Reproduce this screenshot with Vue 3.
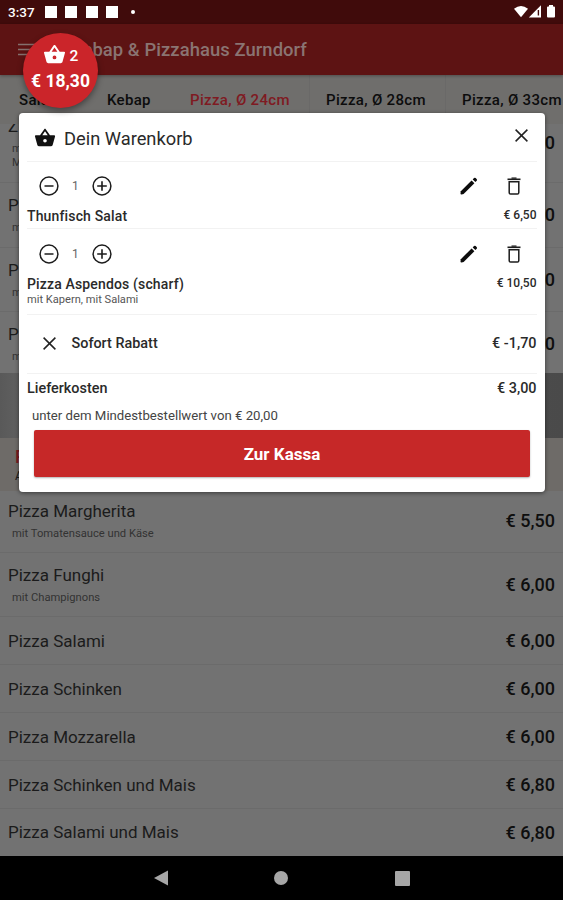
<script setup>
const tabs = [
  { label: 'Salate', cls: 'tab-a' },
  { label: 'Kebap', cls: 'tab-b' },
  { label: 'Pizza, Ø 24cm', cls: 'tab-c' },
  { label: 'Pizza, Ø 28cm', cls: 'tab-d' },
  { label: 'Pizza, Ø 33cm', cls: 'tab-e' },
]
const upper = [1, 2, 3]
const menu = [
  { name: 'Pizza Margherita', note: 'mit Tomatensauce und Käse', price: '€ 5,50' },
  { name: 'Pizza Funghi', note: 'mit Champignons', price: '€ 6,00' },
  { name: 'Pizza Salami', price: '€ 6,00' },
  { name: 'Pizza Schinken', price: '€ 6,00' },
  { name: 'Pizza Mozzarella', price: '€ 6,00' },
  { name: 'Pizza Schinken und Mais', price: '€ 6,80' },
  { name: 'Pizza Salami und Mais', price: '€ 6,80' },
]
const cart = [
  { name: 'Thunfisch Salat', price: '€ 6,50' },
  { name: 'Pizza Aspendos (scharf)', note: 'mit Kapern, mit Salami', price: '€ 10,50' },
]
const basket =
  'M5.5 21C4.72 21 4.04 20.55 3.71 19.9L1.1 10.44L1 10A1 1 0 0 1 2 9H6.58L11.18 2.43C11.36 2.17 11.66 2 12 2C12.34 2 12.64 2.17 12.82 2.44L17.42 9H22A1 1 0 0 1 23 10L22.96 10.29L20.29 19.9C19.96 20.55 19.28 21 18.5 21H5.5M12 4.74L9 9H15L12 4.74M12 13A2 2 0 0 0 10 15A2 2 0 0 0 12 17A2 2 0 0 0 14 15A2 2 0 0 0 12 13Z'
</script>

<template>
  <div class="screen">
    <div class="status">
      <span class="clock">3:37</span>
      <i v-for="n in 4" :key="n" class="sq"></i>
      <i class="dot"></i>
      <svg class="sys" width="44" height="16" viewBox="0 0 44 16">
        <path d="M1 4.8Q8 -0.8 15 4.8L8 13.2Z" fill="#fff" />
        <path d="M28 1.2V13.6H15.8Z" fill="#fff" />
        <path d="M25.4 6V11.5" stroke="#400b0b" stroke-width="1.4" />
        <path d="M34 3.4Q34 2.4 35 2.4H36V1H40V2.4H41Q42 2.4 42 3.4V12.6Q42 13.6 41 13.6H35Q34 13.6 34 12.6Z" fill="#fff" />
      </svg>
    </div>

    <div class="appbar">
      <svg class="burger" width="18" height="14" viewBox="0 0 18 14">
        <path d="M0 1.5H18M0 6.5H18M0 11.5H18" stroke="#85706e" stroke-width="1.7" />
      </svg>
      <span class="title">Kebap &amp; Pizzahaus Zurndorf</span>
    </div>

    <div class="tabs">
      <span v-for="t in tabs" :key="t.cls" class="tab" :class="t.cls">{{ t.label }}</span>
    </div>

    <div class="list">
      <div class="row first">
        <div class="info">
          <div class="name">Z</div>
          <div class="note">m</div>
          <div class="note second">M</div>
        </div>
        <span class="price">0</span>
      </div>
      <div v-for="n in upper" :key="n" class="row tall">
        <div class="info">
          <div class="name">P</div>
          <div class="note">m</div>
        </div>
        <span class="price">0</span>
      </div>
      <div class="banner"></div>
      <div class="section">
        <div class="section-title">P</div>
        <div class="section-note">A</div>
      </div>
      <div v-for="m in menu" :key="m.name" class="row" :class="{ tall: m.note }">
        <div class="info">
          <div class="name">{{ m.name }}</div>
          <div v-if="m.note" class="note">{{ m.note }}</div>
        </div>
        <span class="price">{{ m.price }}</span>
      </div>
    </div>

    <div class="nav">
      <svg width="14" height="16" viewBox="0 0 14 16"><path d="M0 8L14 0.4V15.6Z" fill="#a6a6a6" /></svg>
      <svg width="14" height="14" viewBox="0 0 14 14"><circle cx="7" cy="7" r="7" fill="#a6a6a6" /></svg>
      <svg width="15" height="15" viewBox="0 0 15 15"><rect width="15" height="15" rx="1" fill="#a6a6a6" /></svg>
    </div>

    <div class="dialog">
      <div class="head">
        <svg class="basket" width="22" height="22" viewBox="0 0 24 24"><path :d="basket" fill="#111" /></svg>
        <span class="heading">Dein Warenkorb</span>
        <svg class="close" width="13" height="13" viewBox="0 0 13 13">
          <path d="M0.6 0.6L12.4 12.4M12.4 0.6L0.6 12.4" stroke="#222" stroke-width="1.5" />
        </svg>
      </div>

      <div v-for="c in cart" :key="c.name" class="item" :class="{ noted: c.note }">
        <div class="tools">
          <svg width="20" height="20" viewBox="0 0 20 20">
            <circle cx="10" cy="10" r="8.9" fill="none" stroke="#1c1c1c" stroke-width="1.5" />
            <path d="M5.5 10H14.5" stroke="#1c1c1c" stroke-width="1.5" />
          </svg>
          <span class="qty">1</span>
          <svg width="20" height="20" viewBox="0 0 20 20">
            <circle cx="10" cy="10" r="8.9" fill="none" stroke="#1c1c1c" stroke-width="1.5" />
            <path d="M5.2 10H14.8M10 5.2V14.8" stroke="#1c1c1c" stroke-width="1.6" />
          </svg>
          <svg class="pencil" width="18" height="18" viewBox="0 0 18 18">
            <path d="M0.8 14.2L11.6 3.4L14.4 6.2L3.6 17L1.6 17.4Q0.5 17.5 0.5 16.4Z" fill="#0c0c0c" />
            <path d="M12.7 2.4L14 1.1Q14.8 0.4 15.7 1.1L16.8 2.2Q17.4 3 16.7 3.8L15.4 5.1Z" fill="#0c0c0c" />
          </svg>
          <svg class="trash" width="14" height="18" viewBox="0 0 14 18">
            <path d="M0.5 2.3H13.5" stroke="#1c1c1c" stroke-width="1.6" />
            <path d="M4.5 1.1H9.5" stroke="#1c1c1c" stroke-width="1.3" />
            <path d="M2.2 4.8H11.8V15.4Q11.8 17 10.4 17H3.6Q2.2 17 2.2 15.4Z" fill="none" stroke="#1c1c1c" stroke-width="1.5" />
          </svg>
        </div>
        <div class="line">
          <span class="cname">{{ c.name }}</span>
          <span class="cprice">{{ c.price }}</span>
        </div>
        <div v-if="c.note" class="cnote">{{ c.note }}</div>
      </div>

      <div class="discount">
        <svg width="13" height="13" viewBox="0 0 13 13">
          <path d="M0.6 0.6L12.4 12.4M12.4 0.6L0.6 12.4" stroke="#222" stroke-width="1.5" />
        </svg>
        <span class="dname">Sofort Rabatt</span>
        <span class="dprice">€ -1,70</span>
      </div>

      <div class="delivery">
        <span class="lname">Lieferkosten</span>
        <span class="lprice">€ 3,00</span>
      </div>
      <div class="minimum">unter dem Mindestbestellwert von € 20,00</div>
      <button class="checkout">Zur Kassa</button>
    </div>

    <div class="fab">
      <div class="fab-top">
        <svg width="23" height="23" viewBox="0 0 24 24"><path :d="basket" fill="#fff" /></svg>
        <span class="count">2</span>
      </div>
      <div class="total">€ 18,30</div>
    </div>
  </div>
</template>

<style>
body {
  background: #000;
}
</style>

<style scoped>
.screen {
  position: relative;
  width: 563px;
  height: 900px;
  overflow: hidden;
  display: flex;
  flex-direction: column;
  background: #727272;
  font-family: Roboto, "Liberation Sans", sans-serif;
  color: #1b1b1b;
  white-space: nowrap;
}
svg {
  display: block;
  flex: none;
}
.status {
  height: 24px;
  flex: none;
  display: flex;
  align-items: center;
  background: #400b0b;
  color: #fff;
  padding: 0 7px 0 8px;
}
.clock {
  width: 36.5px;
  font-size: 13.5px;
  font-weight: 500;
  line-height: 24px;
}
.sq {
  width: 12px;
  height: 12px;
  margin-right: 8.6px;
  background: #fff;
}
.dot {
  width: 4px;
  height: 4px;
  margin-left: 4.5px;
  border-radius: 50%;
  background: #fff;
}
.sys {
  margin-left: auto;
  margin-right: -1px;
  margin-top: -1px;
}
.appbar {
  height: 51px;
  flex: none;
  display: flex;
  align-items: center;
  padding-left: 18px;
  background: #5d1313;
  position: relative;
  box-shadow: 0 1px 3px rgba(0, 0, 0, 0.3);
}
.burger {
  margin-right: 35px;
}
.title {
  font-size: 18.4px;
  font-weight: 500;
  letter-spacing: 0.08px;
  color: #8a7472;
}
.tabs {
  height: 49px;
  flex: none;
  display: flex;
  align-items: center;
  background: #6f6e6c;
  font-size: 15px;
  font-weight: 500;
  color: #0c0c0c;
  letter-spacing: 0.32px;
}
.tab {
  flex: none;
  height: 49px;
  box-sizing: border-box;
  line-height: 51px;
}
.tab-a {
  width: 107px;
  padding-left: 19px;
}
.tab-b {
  width: 83px;
}
.tab-c {
  width: 120px;
  color: #7f1a22;
  border-right: 1px solid #6a6968;
}
.tab-d {
  width: 136px;
  padding-left: 16px;
  border-right: 1px solid #6a6968;
}
.tab-e {
  padding-left: 16px;
}
.list {
  height: 732px;
  flex: none;
  overflow: hidden;
}
.row {
  height: 47.9px;
  box-sizing: border-box;
  border-bottom: 1px solid #6b6b6b;
  padding: 0 8px;
  display: flex;
  align-items: center;
  justify-content: space-between;
}
.row.tall {
  height: 64.6px;
}
.row.first {
  height: 76px;
  margin-top: -17px;
  padding-bottom: 4px;
}
.name {
  font-size: 17px;
  line-height: 22px;
}
.note {
  font-size: 11.2px;
  line-height: 14px;
  padding: 5px 0 0 4px;
  color: #333;
}
.note.second {
  padding-top: 0;
}
.price {
  font-size: 18px;
  font-weight: 500;
  color: #0e0e0e;
}
.banner {
  height: 65px;
  margin-top: -4px;
  position: relative;
  background: linear-gradient(90deg, #595959 0, #626262 25px, #505050 60%, #4a4a4a);
}
.section {
  height: 53px;
  margin-bottom: -2.5px;
  box-sizing: border-box;
  padding: 8px 0 0 15px;
  background: #6e6b68;
}
.section-title {
  font-size: 18px;
  line-height: 22px;
  font-weight: 500;
  color: #7f1a22;
}
.section-note {
  font-size: 12px;
  line-height: 16px;
}
.nav {
  height: 44px;
  flex: none;
  display: flex;
  align-items: center;
  gap: 106.5px;
  padding-left: 153.5px;
  background: #000;
}
.dialog {
  position: absolute;
  left: 19px;
  top: 113px;
  width: 525.5px;
  height: 378.5px;
  box-sizing: border-box;
  padding: 0 8px;
  background: #fff;
  border-radius: 4px;
  box-shadow: 0 1px 4px rgba(0, 0, 0, 0.5);
  color: #2a2a2a;
}
.head {
  height: 48.5px;
  box-sizing: border-box;
  display: flex;
  align-items: center;
  padding: 3px 9px 0 7px;
  border-bottom: 1px solid #f2f2f2;
}
.heading {
  margin-left: 8px;
  font-size: 18.3px;
}
.close {
  margin-left: auto;
  margin-top: -6px;
}
.item {
  height: 67px;
  box-sizing: border-box;
  padding-top: 14.5px;
  border-bottom: 1px solid #f2f2f2;
}
.item.noted {
  height: 86.5px;
  padding-top: 15px;
}
.tools {
  height: 20px;
  display: flex;
  align-items: center;
  padding-left: 12px;
}
.qty {
  width: 32.5px;
  text-align: center;
  font-size: 12px;
  color: #666;
}
.pencil {
  margin-left: auto;
}
.trash {
  margin: 0 16px 0 29px;
}
.line {
  display: flex;
  justify-content: space-between;
  height: 20px;
  margin-top: 10px;
  line-height: 20px;
}
.cname {
  font-size: 14px;
  font-weight: 500;
  letter-spacing: 0.15px;
}
.cprice {
  font-size: 12px;
  font-weight: 500;
  line-height: 18px;
}
.cnote {
  font-size: 11.1px;
  line-height: 12px;
  color: #555;
}
.discount {
  height: 58.5px;
  box-sizing: border-box;
  display: flex;
  align-items: center;
  padding-left: 16px;
  border-bottom: 1px solid #f2f2f2;
}
.dname {
  margin-left: 15.5px;
  font-size: 14.4px;
  font-weight: 500;
}
.dprice {
  margin-left: auto;
  font-size: 14.4px;
  font-weight: 500;
}
.delivery {
  height: 30.5px;
  display: flex;
  justify-content: space-between;
  align-items: center;
  font-size: 14.4px;
  font-weight: 500;
}
.minimum {
  height: 26px;
  line-height: 23px;
  padding-left: 5px;
  font-size: 13.2px;
  color: #444;
}
.checkout {
  display: block;
  width: 496px;
  height: 47px;
  margin: 0 7px;
  padding: 0;
  border: 0;
  border-radius: 2px;
  background: #c62828;
  color: #fff;
  font-family: inherit;
  font-size: 17px;
  font-weight: 700;
  box-shadow: 0 1px 2px rgba(0, 0, 0, 0.3);
}
.fab {
  position: absolute;
  left: 23px;
  top: 33px;
  width: 75px;
  height: 75px;
  box-sizing: border-box;
  padding-top: 10px;
  border-radius: 50%;
  background: #cb252a;
  color: #fff;
  box-shadow: 0 3px 6px rgba(0, 0, 0, 0.4);
}
.fab-top {
  display: flex;
  justify-content: center;
  align-items: center;
  height: 23px;
}
.count {
  margin: 3px 0 0 4px;
  font-size: 15.5px;
  font-weight: 500;
}
.total {
  margin-top: 4px;
  text-align: center;
  font-size: 17.5px;
  line-height: 22px;
  font-weight: 700;
}
</style>
